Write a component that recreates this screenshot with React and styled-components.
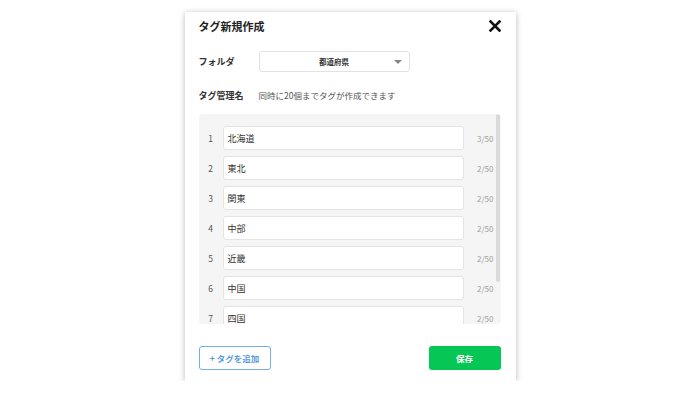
import React from 'react'
import styled, { createGlobalStyle } from 'styled-components'

const Global = createGlobalStyle`
  html, body {
    margin: 0;
    background: #fff;
    font-family: "Noto Sans CJK JP", "Noto Sans", sans-serif;
    color: #333;
  }
`

const Modal = styled.div`
  box-sizing: border-box;
  width: 331px;
  height: 369px;
  margin: 12px auto 0;
  padding: 0 15px 0 14px;
  background: #fff;
  box-shadow: 0 1px 6px rgba(0, 0, 0, 0.28);
  display: flex;
  flex-direction: column;
`

const Header = styled.div`
  height: 28px;
  display: flex;
  align-items: center;
  justify-content: space-between;
`

const Title = styled.h1`
  margin: 0;
  font-size: 11px;
  font-weight: 700;
  color: #222;
`

const Close = styled.button`
  border: 0;
  background: none;
  padding: 0;
  margin-right: 0;
  width: 12px;
  height: 12px;
  display: flex;
  cursor: pointer;
`

const FieldRow = styled.div`
  display: flex;
  align-items: center;
  margin-top: ${({ top }) => top}px;
  height: ${({ h }) => h}px;
`

const Label = styled.div`
  width: 60px;
  font-size: 9px;
  font-weight: 700;
  color: #333;
`

const Select = styled.div`
  box-sizing: border-box;
  width: 151px;
  height: 21px;
  border: 1px solid #e2e2e2;
  border-radius: 3px;
  display: flex;
  align-items: center;
  justify-content: center;
  position: relative;
  font-size: 7.5px;
  font-weight: 700;
  color: #333;
`

const Caret = styled.span`
  position: absolute;
  right: 7px;
  top: 8px;
  border-left: 4px solid transparent;
  border-right: 4px solid transparent;
  border-top: 4px solid #888;
`

const Help = styled.div`
  font-size: 8.5px;
  color: #555;
`

const Panel = styled.div`
  position: relative;
  box-sizing: border-box;
  margin-top: 12px;
  height: 210px;
  flex-shrink: 0;
  background: #f5f5f5;
  border-radius: 4px;
  overflow: hidden;
`

const List = styled.div`
  padding: 12px 5px 12px 0;
  display: flex;
  flex-direction: column;
  gap: 6px;
`

const Thumb = styled.div`
  position: absolute;
  top: 0;
  right: 1px;
  width: 4px;
  height: 168px;
  background: #dadada;
  border-radius: 2px;
`

const TagRow = styled.div`
  display: flex;
  align-items: center;
  height: 24px;
  flex-shrink: 0;
`

const Num = styled.div`
  width: 24px;
  text-align: center;
  font-size: 8.5px;
  color: #555;
`

const TagInput = styled.div`
  box-sizing: border-box;
  width: 241px;
  height: 24px;
  background: #fff;
  border: 1px solid #e4e4e4;
  border-radius: 3px;
  padding-left: 4px;
  display: flex;
  align-items: center;
  font-size: 9px;
  color: #333;
`

const Count = styled.div`
  flex: 1;
  text-align: right;
  padding-right: 2px;
  font-size: 8px;
  color: #a0a0a0;
`

const Footer = styled.div`
  margin-top: 22px;
  display: flex;
  justify-content: space-between;
`

const Button = styled.button`
  box-sizing: border-box;
  width: 72px;
  height: 24px;
  border-radius: 3px;
  font-family: inherit;
  font-size: 8.5px;
  font-weight: 700;
  cursor: pointer;
  border: ${({ primary }) => (primary ? '0' : '1.5px solid #76aee6')};
  background: ${({ primary }) => (primary ? '#06c755' : '#fff')};
  color: ${({ primary }) => (primary ? '#fff' : '#5b9bdc')};
`

const tags = ['北海道', '東北', '関東', '中部', '近畿', '中国', '四国']

export default function App() {
  return (
    <>
      <Global />
      <Modal>
        <Header>
          <Title>タグ新規作成</Title>
          <Close aria-label="閉じる">
            <svg width="12" height="12" viewBox="0 0 12 12">
              <path d="M1.5 1.5 L10.5 10.5 M10.5 1.5 L1.5 10.5" stroke="#111" strokeWidth="2.6" strokeLinecap="square" />
            </svg>
          </Close>
        </Header>
        <FieldRow top={11} h={21}>
          <Label>フォルダ</Label>
          <Select>
            都道府県
            <Caret />
          </Select>
        </FieldRow>
        <FieldRow top={16} h={14}>
          <Label>タグ管理名</Label>
          <Help>同時に20個までタグが作成できます</Help>
        </FieldRow>
        <Panel>
          <List>
            {tags.map((t, i) => (
              <TagRow key={t}>
                <Num>{i + 1}</Num>
                <TagInput>{t}</TagInput>
                <Count>{t.length}/50</Count>
              </TagRow>
            ))}
          </List>
          <Thumb />
        </Panel>
        <Footer>
          <Button>+ タグを追加</Button>
          <Button primary>保存</Button>
        </Footer>
      </Modal>
    </>
  )
}
